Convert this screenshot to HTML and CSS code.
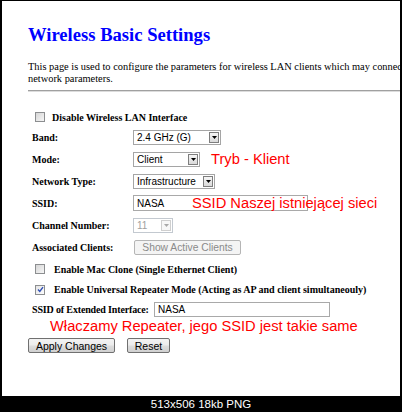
FILE: index.html
```html
<!DOCTYPE html>
<html>
<head>
<meta charset="utf-8">
<title>Wireless Basic Settings</title>
<link rel="stylesheet" href="styles.css">
</head>
<body>
<div class="frame">
  <h1 class="title">Wireless Basic Settings</h1>
  <p class="intro">This page is used to configure the parameters for wireless LAN clients which may connect to your Access Point. Here you may change wireless encryption settings as well as wireless<br>network parameters.</p>
  <div class="rule"></div>
  <div class="form">
    <div class="row check-row first">
      <span class="cb"></span><span class="cb-label">Disable Wireless LAN Interface</span>
    </div>
    <div class="row">
      <span class="field">Band:</span>
      <span class="select w-band"><span class="val">2.4 GHz (G)</span><span class="arrow"><svg width="5" height="3" viewBox="0 0 5 3"><path d="M0 0H5L2.5 3Z" fill="#000"/></svg></span></span>
    </div>
    <div class="row">
      <span class="field">Mode:</span>
      <span class="select w-mode"><span class="val">Client</span><span class="arrow"><svg width="5" height="3" viewBox="0 0 5 3"><path d="M0 0H5L2.5 3Z" fill="#000"/></svg></span></span>
      <span class="note note-mode">Tryb - Klient</span>
    </div>
    <div class="row">
      <span class="field">Network Type:</span>
      <span class="select w-net"><span class="val">Infrastructure</span><span class="arrow"><svg width="5" height="3" viewBox="0 0 5 3"><path d="M0 0H5L2.5 3Z" fill="#000"/></svg></span></span>
    </div>
    <div class="row ssid-row">
      <span class="field">SSID:</span>
      <span class="textbox w-ssid">NASA</span>
      <span class="note note-ssid">SSID Naszej istniejącej sieci</span>
    </div>
    <div class="row">
      <span class="field">Channel Number:</span>
      <span class="select w-chan disabled"><span class="val">11</span><span class="arrow"><svg width="5" height="3" viewBox="0 0 5 3"><path d="M0 0H5L2.5 3Z" fill="#a8a8a8"/></svg></span></span>
    </div>
    <div class="row">
      <span class="field">Associated Clients:</span>
      <span class="btn btn-disabled w-show">Show Active Clients</span>
    </div>
    <div class="row check-row">
      <span class="cb"></span><span class="cb-label wide">Enable Mac Clone (Single Ethernet Client)</span>
    </div>
    <div class="row check-row rep-row">
      <span class="cb checked"><svg width="7" height="7" viewBox="0 0 7 7"><path d="M1 3.6L2.8 5.4L6 1.2" stroke="#2f4fb5" stroke-width="1.4" fill="none"/></svg></span><span class="cb-label wide">Enable Universal Repeater Mode (Acting as AP and client simultaneouly)</span>
    </div>
    <div class="row ext-row">
      <span class="field field-ext">SSID of Extended Interface:</span>
      <span class="textbox w-ext">NASA</span>
    </div>
    <div class="red-line">Właczamy Repeater, jego SSID jest takie same</div>
    <div class="actions">
      <span class="btn w-apply">Apply Changes</span>
      <span class="btn w-reset">Reset</span>
    </div>
  </div>
</div>
<div class="caption">513x506 18kb PNG</div>
</body>
</html>
```
FILE: styles.css
```css
html, body {
  margin: 0;
  padding: 0;
}
body {
  background: #000;
  width: 402px;
  height: 412px;
  overflow: hidden;
  font-family: "Liberation Serif", "Times New Roman", serif;
  color: #000;
}
.frame {
  margin: 1px 2px 0 2px;
  width: 398px;
  height: 395px;
  background: #fff;
  overflow: hidden;
  padding-left: 26px;
  box-sizing: border-box;
}
.title {
  margin: 23px 0 0;
  font-size: 18.6px;
  line-height: 22px;
  font-weight: bold;
  color: #0000ff;
  white-space: nowrap;
}
.intro {
  margin: 15px 0 0;
  font-size: 10.4px;
  line-height: 11.5px;
  white-space: nowrap;
}
.rule {
  margin-top: 6px;
  width: 600px;
  border-top: 1px solid #a0a0a0;
  border-bottom: 1px solid #dcdcdc;
}
.form {
  margin-top: 16px;
  font-size: 10px;
  font-weight: bold;
}
.row {
  display: flex;
  align-items: center;
  height: 22px;
  padding-left: 4px;
  white-space: nowrap;
}
.row.first {
  height: 18px;
}
.row.rep-row {
  height: 19px;
}
.row.ext-row {
  height: 20px;
}
.check-row {
  padding-left: 7px;
}
.field {
  width: 101px;
  flex: none;
}
.field-ext {
  width: 122px;
  letter-spacing: -0.15px;
}
.cb {
  width: 10px;
  height: 10px;
  box-sizing: border-box;
  border: 1px solid #8c8e90;
  background: linear-gradient(135deg, #d6d6d6, #f6f6f6);
  display: inline-flex;
  align-items: center;
  justify-content: center;
  flex: none;
}
.cb.checked {
  background: linear-gradient(135deg, #e4e4e4, #fdfdfd);
}
.cb-label {
  margin-left: 7px;
}
.cb-label.wide {
  margin-left: 9px;
}
.select {
  display: inline-flex;
  align-items: center;
  justify-content: space-between;
  height: 15px;
  box-sizing: border-box;
  border: 1px solid #a5a5a5;
  background: #fff;
  padding: 0 1px 0 3px;
  font-family: "Liberation Sans", Arial, sans-serif;
  font-size: 10px;
  font-weight: normal;
  flex: none;
}
.arrow {
  width: 10px;
  height: 11px;
  box-sizing: border-box;
  border: 1px solid #7e7e7e;
  background: linear-gradient(#f6f6f6, #d9d9d9);
  display: inline-flex;
  align-items: center;
  justify-content: center;
}
.arrow svg {
  display: block;
}
.select.disabled {
  border-color: #c3c9d0;
  color: #a0a0a0;
}
.select.disabled .arrow {
  border-color: #cfcfcf;
  background: #f7f7f7;
}
.w-band { width: 88px; }
.w-mode { width: 67px; }
.w-net { width: 82px; }
.w-chan { width: 40px; }
.textbox {
  display: inline-flex;
  align-items: center;
  box-sizing: border-box;
  border: 1px solid #a9a9a9;
  background: #fff;
  padding-left: 3px;
  font-family: "Liberation Sans", Arial, sans-serif;
  font-size: 10px;
  font-weight: normal;
  flex: none;
}
.w-ssid { width: 175px; height: 16px; }
.w-ext { width: 176px; height: 15px; }
.ssid-row {
  position: relative;
}
.note {
  font-family: "Liberation Sans", Arial, sans-serif;
  font-size: 14.7px;
  font-weight: normal;
  color: #ff0000;
  line-height: 16px;
}
.note-mode {
  margin-left: 11px;
}
.note-ssid {
  position: absolute;
  left: 164px;
  top: 3px;
}
.btn {
  display: inline-flex;
  align-items: center;
  justify-content: center;
  box-sizing: border-box;
  height: 15px;
  border: 1px solid #707070;
  border-radius: 2px;
  background: linear-gradient(#f3f3f3, #ececec 48%, #dddddd 52%, #d0d0d0);
  font-family: "Liberation Sans", Arial, sans-serif;
  font-size: 10.5px;
  font-weight: normal;
  color: #000;
  flex: none;
}
.btn-disabled {
  border-color: #b5b5b5;
  background: #f4f4f4;
  color: #8a8a8a;
  font-size: 10.3px;
}
.w-show { width: 107px; margin-left: 1px; }
.w-apply { width: 87px; }
.w-reset { width: 43px; }
.red-line {
  padding-left: 22px;
  font-family: "Liberation Sans", Arial, sans-serif;
  font-size: 14.7px;
  font-weight: normal;
  line-height: 14px;
  color: #ff0000;
  white-space: nowrap;
}
.actions {
  display: flex;
  gap: 12px;
  margin-top: 5px;
}
.caption {
  height: 16px;
  color: #fff;
  font-family: "Liberation Sans", Arial, sans-serif;
  font-size: 11.5px;
  line-height: 16px;
  text-align: center;
}
```
